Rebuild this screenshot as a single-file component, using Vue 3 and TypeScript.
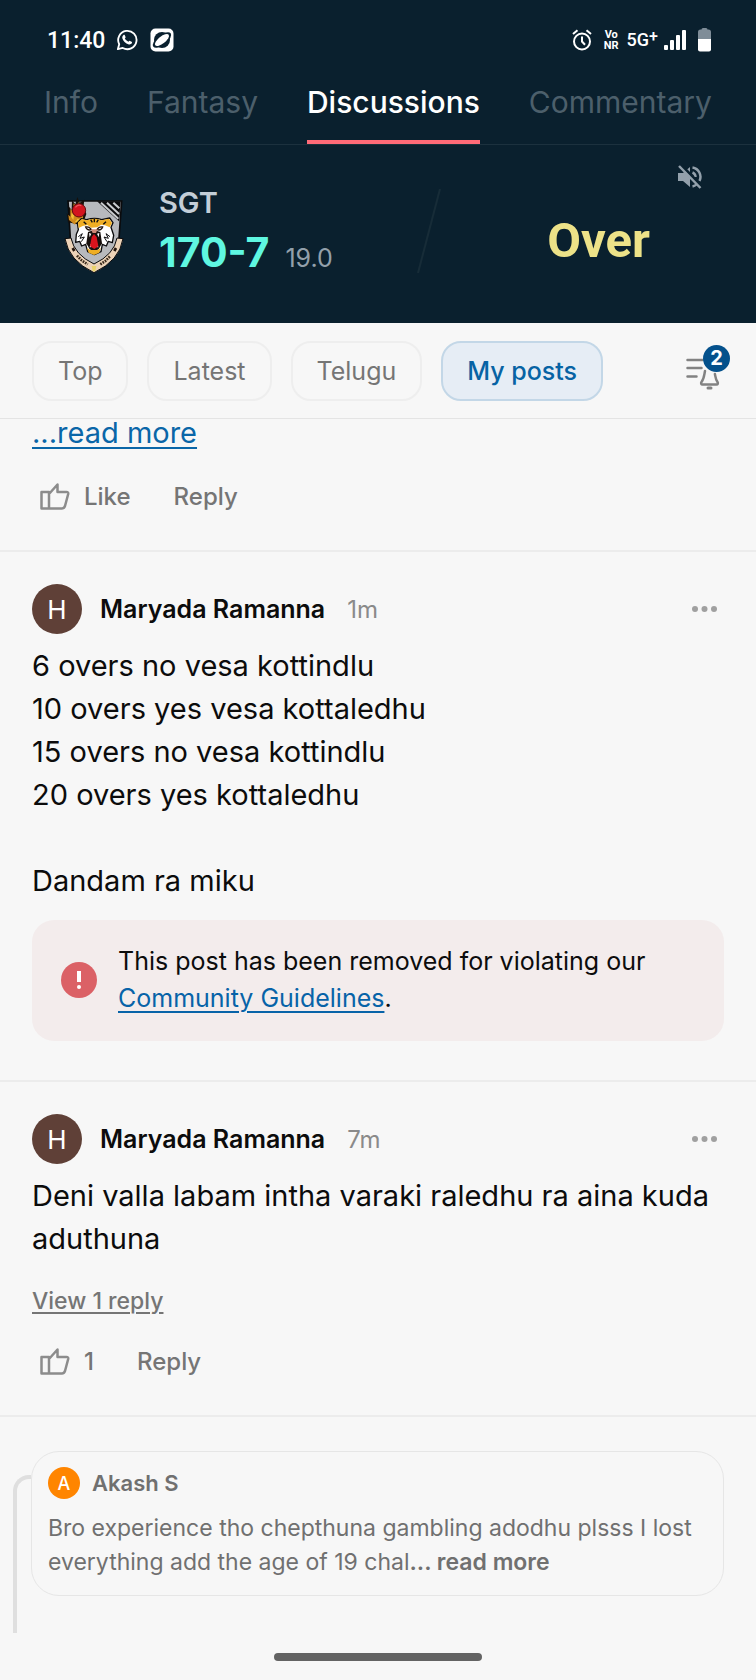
<script setup lang="ts">
import { ref } from 'vue'

interface Post {
  id: number
  author: string
  initial: string
  age: string
  text: string
  removed?: boolean
  replies?: string
  likes?: string
}

const tabs = ['Info', 'Fantasy', 'Discussions', 'Commentary']
const activeTab = ref('Discussions')

const filters = ['Top', 'Latest', 'Telugu', 'My posts']
const activeFilter = ref('My posts')

const posts: Post[] = [
  {
    id: 1,
    author: 'Maryada Ramanna',
    initial: 'H',
    age: '1m',
    text: '6 overs no vesa kottindlu\n10 overs yes vesa kottaledhu\n15 overs no vesa kottindlu\n20 overs yes kottaledhu\n\nDandam ra miku',
    removed: true,
  },
  {
    id: 2,
    author: 'Maryada Ramanna',
    initial: 'H',
    age: '7m',
    text: 'Deni valla labam intha varaki raledhu ra aina kuda aduthuna',
    replies: 'View 1 reply',
    likes: '1',
  },
]
</script>

<template>
  <div class="screen">
    <header class="top">
      <div class="status">
        <span class="clock">11:40</span>
        <svg class="whatsapp" viewBox="0 0 24 24" aria-hidden="true">
          <path d="M2 22l1.500-5.400A10 10 0 1 1 7.400 20.700Z" fill="none" stroke="#fff" stroke-width="2" stroke-linejoin="round" />
          <path d="M8.200 6.500c.5-.4 1.100-.3 1.400.3l.8 1.800c.2.400 0 .8-.8 1.600.9 1.800 2.100 3 4 3.800.8-1 1.200-1.300 1.700-1l1.700.9c.6.300.6.8.3 1.400-.6 1.300-1.900 1.800-3.300 1.500-3.700-.9-6.300-3.500-7.100-6.600-.3-1.500.2-2.900 1.300-3.700z" fill="#fff" />
        </svg>
        <svg class="orbit" viewBox="0 0 24 24" aria-hidden="true">
          <rect x="0.500" y="0.500" width="23" height="23" rx="5" fill="#fff" />
          <circle cx="12" cy="12" r="8" fill="#0a202e" />
          <ellipse cx="12" cy="12" rx="11" ry="5" transform="rotate(-38 12 12)" fill="#0a202e" />
          <ellipse cx="12" cy="12" rx="8.500" ry="3.500" transform="rotate(-38 12 12)" fill="#fff" />
        </svg>
        <span class="spacer"></span>
        <svg class="alarm" viewBox="0 0 20 22" fill="none" stroke="#fff" aria-hidden="true">
          <circle cx="10" cy="12.500" r="8" stroke-width="2" />
          <path d="M10 7.500v5l3 3.200" stroke-width="2" />
          <path d="M1 5l4.500-3.800M19 5l-4.500-3.800" stroke-width="2" />
        </svg>
        <span class="vonr"><span>Vo</span><span>NR</span></span>
        <span class="network">5G<sup>+</sup></span>
        <svg class="signal" viewBox="0 0 22 20" fill="#fff" aria-hidden="true">
          <rect x="0" y="15" width="4" height="5" rx="1" />
          <rect x="6" y="10" width="4" height="10" rx="1" />
          <rect x="12" y="5" width="4" height="15" rx="1" />
          <rect x="18" y="0" width="4" height="20" rx="1" />
        </svg>
        <svg class="battery" viewBox="0 0 13 24" aria-hidden="true">
          <path d="M3.500 1.500a1.500 1.500 0 0 1 1.500-1.500h3a1.500 1.500 0 0 1 1.500 1.500h1a2.500 2.500 0 0 1 2.500 2.500v7h-13v-7a2.500 2.500 0 0 1 2.500-2.500z" fill="#7f8d98" />
          <path d="M0 11h13v10.500a2 2 0 0 1-2 2h-9a2 2 0 0 1-2-2z" fill="#fff" />
        </svg>
      </div>

      <nav class="tabs">
        <button
          v-for="tab in tabs"
          :key="tab"
          type="button"
          class="tab"
          :class="{ active: tab === activeTab }"
          @click="activeTab = tab"
        >{{ tab }}</button>
      </nav>

      <section class="scoreboard">
        <div class="team">
          <svg class="crest" viewBox="190 105 192 240" role="img" aria-label="SGT crest">
            <path d="M205 123H366L358 235Q345 300 283 326Q222 300 212 235Z" fill="#b7b9bd" stroke="#0b0b0d" stroke-width="5" />
            <path d="M292 124H363L358 184Z" fill="#0b0b0d" />
            <path d="M304 128l52 48M322 128l36 34M341 128l18 17" stroke="#c9cbce" stroke-width="6" />
            <path d="M196 236l18-2q10 50 69 78q60-28 69-78l18 2q-10 66-87 102q-76-36-87-102z" fill="#ecd3b8" stroke="#0b0b0d" stroke-width="3" />
            <path d="M232 287l14 14 18 12M302 313l14-9 16-16" fill="none" stroke="#3a2a1c" stroke-width="8" stroke-dasharray="5 3" />
            <path d="M276 318h14l-3 16h-8z" fill="#e9d36a" />
            <path d="M219 264l5 9M349 264l-5 9" stroke="#24160e" stroke-width="8" />
            <path d="M205 187l-4-28 6 8 1-27 8 10 1-29 10 12 6-22 7 17 14-9-2 17 8 26-12 34z" fill="#17100a" />
            <path d="M208 180l-2-16 6 6v-24l8 8 2-24 9 10 5-14 6 12 10-2-2 40-14 16-6-8-4 10z" fill="#d08a1c" />
            <path d="M214 170l2-12 7 8-2 14zM226 186l8-10 10 4-5 12z" fill="#f4c136" />
            <circle cx="238" cy="151" r="20" fill="#d4151f" stroke="#5c0b10" stroke-width="3" />
            <path d="M227 142q9-10 18-5" fill="none" stroke="#f0545a" stroke-width="4" />
            <path d="M233 188l12-12 16 3q24-8 45 0l24-5 10 14-6 14 8 24-4 22-12-4-6 14-12-5-4 22-20 9-20-9-6-22-12 5-6-14-12 3 2-24 6-14z" fill="#fff" stroke="#0b0b0d" stroke-width="4" stroke-linejoin="round" />
            <path d="M235 187l12-10 14 4q24-9 45 0l22-5 9 13-7 13-14-6-12-2-11 8-18 1-12-8-14 3-12 6z" fill="#efae24" />
            <path d="M273 179l5 8M284 177v10M296 179l-5 8M252 185l8 8M319 185l-8 8" stroke="#0b0b0d" stroke-width="4" />
            <path d="M258 201q11-2 17 8-12 4-17-8zM309 201q-11-2-17 8 12 4 17-8z" fill="#e9eef5" stroke="#24150c" stroke-width="4" />
            <path d="M265 216q18-8 37 0l5 34-10 18-14 6-13-6-10-18z" fill="#17100d" />
            <path d="M274 208h20l-5 11h-10z" fill="#ce8a77" />
            <path d="M268 219l2 13 5-11M299 219l-2 13-5-11M270 262l2-11 5 10M296 262l-2-11-5 10" fill="#fff" />
            <path d="M276 231l7-9 8 9 5 28-12 8-13-8z" fill="#d8141d" />
            <path d="M262 263l9 7h24l8-7-4 15-16 7-16-7z" fill="#efae24" />
            <path d="M236 230l12-9-7 14 13-4-9 14M331 230l-12-9 7 14-13-4 9 14" fill="none" stroke="#0b0b0d" stroke-width="3" />
          </svg>
          <div class="figures">
            <h1 class="code">SGT</h1>
            <p class="score"><strong>170-7</strong><span>19.0</span></p>
          </div>
          <svg class="slash" viewBox="0 0 24 84" aria-hidden="true">
            <path d="M23 0L1 84" stroke="#172c38" stroke-width="2" />
          </svg>
        </div>
        <div class="result">
          <button type="button" class="mute" aria-label="Unmute">
            <svg viewBox="0 0 24 24" aria-hidden="true">
              <path d="M0 8h5l7-6v20l-7-6H0z" fill="#93a0ab" />
              <path d="M14.500 2.500a9.500 9.500 0 0 1 7 13.500M14.500 21.500a9 9 0 0 0 4.500-2.500M14.500 7.500a5 5 0 0 1 3 4.500" fill="none" stroke="#93a0ab" stroke-width="2.500" />
              <path d="M3 0l21 21.500" stroke="#0a202e" stroke-width="3" />
              <path d="M1 1l21.500 22" stroke="#93a0ab" stroke-width="2.500" />
            </svg>
          </button>
          <p class="over">Over</p>
        </div>
      </section>
    </header>

    <div class="filters">
      <button
        v-for="name in filters"
        :key="name"
        type="button"
        class="pill"
        :class="{ selected: name === activeFilter }"
        @click="activeFilter = name"
      >{{ name }}</button>
      <button type="button" class="alerts" aria-label="Post notifications, 2 new">
        <svg viewBox="0 0 44 52" fill="none" stroke="#828282" stroke-width="2.500" stroke-linecap="round" aria-hidden="true">
          <path d="M1.500 15h15M1.500 23h14M1.500 31.500h9" />
          <path d="M19 26c-1 5-1 8-3.500 11-.8 1.200-.3 2.500 1 2.500h14c1.300 0 1.800-1.300 1-2.500-2-3-2-5-2.600-8" />
          <path d="M22 43h3" stroke-width="3" />
        </svg>
        <span class="badge">2</span>
      </button>
    </div>

    <main class="feed">
      <article class="post partial">
        <a class="more" href="#">...read more</a>
        <div class="actions">
          <button type="button" class="action">
            <svg class="thumb" viewBox="0 0 30 28" aria-hidden="true">
              <path d="M1.500 9H9V25.500H1.500zM9 11L17.500 1.500V9H26.500Q28.500 9 28.200 11L25 23Q24 25.500 22 25.500H9" />
            </svg>
            <span>Like</span>
          </button>
          <button type="button" class="action">Reply</button>
        </div>
      </article>

      <article v-for="post in posts" :key="post.id" class="post">
        <header class="byline">
          <span class="avatar">{{ post.initial }}</span>
          <h2>{{ post.author }}</h2>
          <time>{{ post.age }}</time>
          <button type="button" class="menu" aria-label="More options">
            <svg viewBox="0 0 40 24" fill="#a0a0a0" aria-hidden="true">
              <circle cx="11" cy="12" r="3" /><circle cx="20.500" cy="12" r="3" /><circle cx="30" cy="12" r="3" />
            </svg>
          </button>
        </header>
        <p class="text">{{ post.text }}</p>

        <div v-if="post.removed" class="notice">
          <svg class="warn" viewBox="0 0 36 36" aria-hidden="true">
            <circle cx="18" cy="18" r="18" fill="#db6166" />
            <rect x="16" y="9" width="4" height="11" fill="#fff" />
            <circle cx="18" cy="25" r="2" fill="#fff" />
          </svg>
          <p>This post has been removed for violating our <a href="#">Community Guidelines</a>.</p>
        </div>

        <a v-if="post.replies" class="replies" href="#">{{ post.replies }}</a>
        <div v-if="post.likes" class="actions">
          <button type="button" class="action">
            <svg class="thumb" viewBox="0 0 30 28" aria-hidden="true">
              <path d="M1.500 9H9V25.500H1.500zM9 11L17.500 1.500V9H26.500Q28.500 9 28.200 11L25 23Q24 25.500 22 25.500H9" />
            </svg>
            <span>{{ post.likes }}</span>
          </button>
          <button type="button" class="action">Reply</button>
        </div>
      </article>

      <section class="thread">
        <span class="connector"></span>
        <blockquote class="quote">
          <header>
            <span class="avatar small">A</span>
            <h3>Akash S</h3>
          </header>
          <p>Bro experience tho chepthuna gambling adodhu plsss I lost everything add the age of 19 chal<b>... read more</b></p>
        </blockquote>
      </section>
    </main>

    <div class="home"></div>
  </div>
</template>

<style>
body {
  margin: 0;
  background: #f7f7f7;
}
</style>

<style scoped>
.screen {
  display: flex;
  flex-direction: column;
  min-height: 100vh;
  background: #f7f7f7;
  color: #0c0c0c;
  font-family: Inter, "Liberation Sans", sans-serif;
}
button {
  margin: 0;
  padding: 0;
  border: 0;
  background: none;
  color: inherit;
  font: inherit;
  cursor: pointer;
}
h1, h2, h3, p, blockquote {
  margin: 0;
}
svg {
  display: block;
  flex: none;
}

.top {
  background: #0a202e;
  color: #fff;
}
.status {
  display: flex;
  align-items: center;
  height: 80px;
  padding: 0 45px 0 47px;
  font-family: Roboto, sans-serif;
}
.clock {
  font-size: 23px;
  font-weight: 500;
}
.whatsapp {
  width: 22px;
  height: 22px;
  margin-left: 11px;
}
.orbit {
  width: 24px;
  height: 24px;
  margin-left: 12px;
}
.spacer {
  flex: 1;
}
.alarm {
  width: 20px;
  height: 22px;
}
.vonr {
  display: flex;
  flex-direction: column;
  align-items: center;
  margin-left: 12px;
  font-size: 11px;
  font-weight: 700;
  line-height: 11px;
}
.network {
  margin-left: 8px;
  font-size: 18px;
  font-weight: 500;
  line-height: 22px;
}
.network sup {
  font-size: 16px;
  line-height: 0;
  vertical-align: 4px;
}
.signal {
  width: 22px;
  height: 20px;
  margin-left: 6px;
}
.battery {
  width: 13px;
  height: 24px;
  margin-left: 12px;
}

.tabs {
  display: flex;
  justify-content: space-between;
  padding: 2px 44px 0;
  border-bottom: 1px solid #1c313e;
}
.tab {
  padding-bottom: 18px;
  border-bottom: 4px solid transparent;
  color: #4c5f6b;
  font-size: 30px;
  line-height: 40px;
}
.tab.active {
  border-color: #ff6b78;
  color: #fff;
  font-weight: 500;
}

.scoreboard {
  display: grid;
  grid-template-columns: 7fr 5fr;
  height: 178px;
}
.team {
  display: flex;
  align-items: flex-start;
  padding: 40px 0 0 63px;
}
.crest {
  width: 64px;
  height: 80px;
  margin-top: 10px;
}
.figures {
  flex: 1;
  margin-left: 32px;
}
.code {
  color: #c3ced8;
  font-size: 29px;
  font-weight: 600;
  line-height: 36px;
}
.score {
  display: flex;
  align-items: baseline;
  gap: 16px;
  margin-top: 7px;
  line-height: 48px;
}
.score strong {
  color: #5ff7e1;
  font-size: 41px;
  font-weight: 700;
}
.score span {
  color: #93a0ab;
  font-size: 25px;
}
.slash {
  width: 24px;
  height: 84px;
  margin-top: 4px;
}
.result {
  display: flex;
  flex-direction: column;
  align-items: center;
}
.mute {
  align-self: flex-end;
  margin: 20px 54px 0 0;
}
.mute svg {
  width: 24px;
  height: 24px;
}
.over {
  margin-top: 24px;
  color: #ede288;
  font-family: Roboto, sans-serif;
  font-size: 49px;
  font-weight: 700;
  line-height: 56px;
}

.filters {
  display: flex;
  align-items: center;
  gap: 19px;
  padding: 18px 26px 17px 32px;
  border-bottom: 1px solid #e4e4e4;
}
.pill {
  height: 60px;
  padding: 0 24px;
  border: 2px solid #eeeeee;
  border-radius: 20px;
  color: #757575;
  font-size: 25px;
}
.pill.selected {
  border-color: #c3d7e7;
  background: #e6edf5;
  color: #0763a4;
  font-weight: 500;
}
.alerts {
  position: relative;
  margin-left: auto;
}
.alerts svg {
  width: 44px;
  height: 52px;
}
.badge {
  position: absolute;
  top: 0;
  right: 0;
  width: 27px;
  height: 27px;
  border-radius: 50%;
  background: #04518c;
  color: #fff;
  font-size: 20px;
  font-weight: 700;
  line-height: 27px;
  text-align: center;
}

.feed {
  flex: 1;
}
.post {
  padding: 32px 32px 33px;
  border-bottom: 2px solid #ececec;
}
.post.partial {
  padding-top: 0;
}
.more {
  display: block;
  width: fit-content;
  color: #0a66a8;
  font-size: 29px;
  line-height: 28px;
  text-decoration-thickness: 2px;
  text-underline-offset: 4px;
}
.actions {
  display: flex;
  gap: 43px;
  margin-top: 25px;
  padding-left: 8px;
}
.partial .actions {
  margin-top: 30px;
}
.action {
  display: flex;
  align-items: center;
  gap: 14px;
  color: #757575;
  font-size: 24px;
  font-weight: 500;
  line-height: 40px;
}
.thumb {
  width: 30px;
  height: 28px;
  fill: none;
  stroke: #8c8c8c;
  stroke-width: 2.5;
  stroke-linejoin: round;
}
.byline {
  display: flex;
  align-items: center;
}
.avatar {
  display: flex;
  flex: none;
  align-items: center;
  justify-content: center;
  width: 50px;
  height: 50px;
  border-radius: 50%;
  background: #5f4037;
  color: #fff;
  font-size: 26px;
}
.byline h2 {
  margin-left: 18px;
  font-size: 25px;
  font-weight: 600;
  line-height: 32px;
}
.byline time {
  margin-left: 22px;
  color: #8a8a8a;
  font-size: 24px;
}
.menu {
  margin-left: auto;
}
.menu svg {
  width: 40px;
  height: 24px;
}
.text {
  margin-top: 10px;
  font-size: 29px;
  line-height: 43px;
  white-space: pre-line;
}
.notice {
  display: flex;
  align-items: center;
  gap: 21px;
  margin: 18px 0 6px;
  padding: 23px 60px 24px 29px;
  border-radius: 22px;
  background: #f3ecec;
  font-size: 25px;
  line-height: 37px;
}
.notice a {
  color: #0763a8;
  text-decoration-thickness: 2px;
  text-underline-offset: 4px;
}
.warn {
  width: 36px;
  height: 36px;
}
.replies {
  display: block;
  width: fit-content;
  margin-top: 25px;
  color: #757575;
  font-size: 23px;
  font-weight: 500;
  line-height: 32px;
  text-decoration-thickness: 2px;
  text-underline-offset: 3px;
}

.thread {
  display: grid;
  grid-template-columns: 31px 1fr;
  min-height: 182px;
  padding: 34px 32px 0 0;
}
.connector {
  margin: 24px 0 0 13px;
  border-top: 4px solid #dfdfdf;
  border-left: 4px solid #dfdfdf;
  border-top-left-radius: 16px;
}
.quote {
  align-self: start;
  padding: 15px 16px 16px;
  border: 1px solid #e6e6e6;
  border-radius: 28px;
  color: #707070;
}
.quote header {
  display: flex;
  align-items: center;
  gap: 12px;
}
.quote h3 {
  font-size: 22px;
  font-weight: 600;
  line-height: 32px;
}
.avatar.small {
  width: 32px;
  height: 32px;
  background: #ff8500;
  font-size: 18px;
  font-weight: 500;
}
.quote p {
  margin-top: 12px;
  font-size: 23px;
  line-height: 34px;
}
.quote b {
  font-weight: 600;
}
.home {
  width: 208px;
  height: 8px;
  margin: 20px auto 19px;
  border-radius: 4px;
  background: #636363;
}
</style>
